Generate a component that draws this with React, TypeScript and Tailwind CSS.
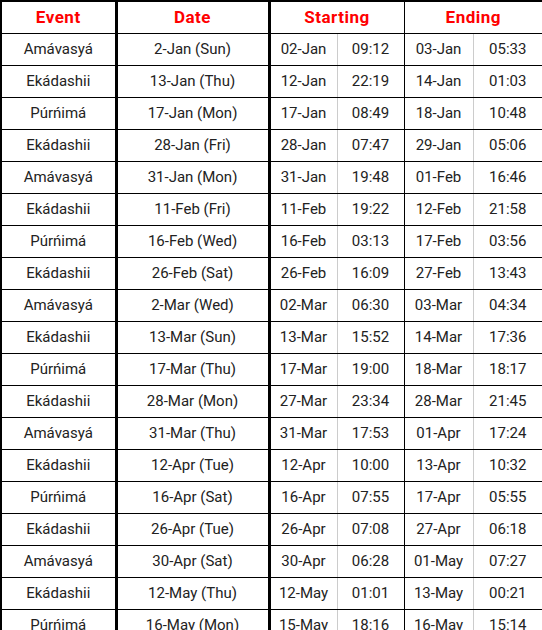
const rows: string[][] = [
  ["Amávasyá", "2-Jan (Sun)", "02-Jan", "09:12", "03-Jan", "05:33"],
  ["Ekádashii", "13-Jan (Thu)", "12-Jan", "22:19", "14-Jan", "01:03"],
  ["Púrńimá", "17-Jan (Mon)", "17-Jan", "08:49", "18-Jan", "10:48"],
  ["Ekádashii", "28-Jan (Fri)", "28-Jan", "07:47", "29-Jan", "05:06"],
  ["Amávasyá", "31-Jan (Mon)", "31-Jan", "19:48", "01-Feb", "16:46"],
  ["Ekádashii", "11-Feb (Fri)", "11-Feb", "19:22", "12-Feb", "21:58"],
  ["Púrńimá", "16-Feb (Wed)", "16-Feb", "03:13", "17-Feb", "03:56"],
  ["Ekádashii", "26-Feb (Sat)", "26-Feb", "16:09", "27-Feb", "13:43"],
  ["Amávasyá", "2-Mar (Wed)", "02-Mar", "06:30", "03-Mar", "04:34"],
  ["Ekádashii", "13-Mar (Sun)", "13-Mar", "15:52", "14-Mar", "17:36"],
  ["Púrńimá", "17-Mar (Thu)", "17-Mar", "19:00", "18-Mar", "18:17"],
  ["Ekádashii", "28-Mar (Mon)", "27-Mar", "23:34", "28-Mar", "21:45"],
  ["Amávasyá", "31-Mar (Thu)", "31-Mar", "17:53", "01-Apr", "17:24"],
  ["Ekádashii", "12-Apr (Tue)", "12-Apr", "10:00", "13-Apr", "10:32"],
  ["Púrńimá", "16-Apr (Sat)", "16-Apr", "07:55", "17-Apr", "05:55"],
  ["Ekádashii", "26-Apr (Tue)", "26-Apr", "07:08", "27-Apr", "06:18"],
  ["Amávasyá", "30-Apr (Sat)", "30-Apr", "06:28", "01-May", "07:27"],
  ["Ekádashii", "12-May (Thu)", "12-May", "01:01", "13-May", "00:21"],
  ["Púrńimá", "16-May (Mon)", "15-May", "18:16", "16-May", "15:14"],
];

const App = () => {
  return (
    <div className="w-[542px] h-[630px] overflow-hidden bg-white">
      <table
        className="w-[542px] table-fixed border-collapse border-2 border-black text-[15px] text-[#222]"
        style={{ fontFamily: "Roboto, 'Liberation Sans', sans-serif" }}
      >
        <colgroup>
          <col className="w-[115px]" />
          <col className="w-[153px]" />
          <col className="w-[68px]" />
          <col className="w-[67px]" />
          <col className="w-[69px]" />
          <col className="w-[70px]" />
        </colgroup>
        <thead>
          <tr className="h-[32px] text-[#ff0000] text-[17px] tracking-[0.5px]">
            <th className="border-b border-black border-r-[3px] font-bold pt-[1px]">Event</th>
            <th className="border-b border-black border-r-[3px] font-bold pt-[1px]">Date</th>
            <th colSpan={2} className="border-b border-r border-black font-bold pt-[1px]">Starting</th>
            <th colSpan={2} className="border-b border-black font-bold pt-[1px]">Ending</th>
          </tr>
        </thead>
        <tbody>
          {rows.map((r, i) => (
            <tr key={i} className="h-[32px] text-center">
              <td className="border-b border-black border-r-[3px]">{r[0]}</td>
              <td className="border-b border-black border-r-[3px]">{r[1]}</td>
              <td className="border-b border-b-black border-r border-r-[#cccccc]">{r[2]}</td>
              <td className="border-b border-black border-r">{r[3]}</td>
              <td className="border-b border-b-black border-r border-r-[#cccccc]">{r[4]}</td>
              <td className="border-b border-black">{r[5]}</td>
            </tr>
          ))}
        </tbody>
      </table>
    </div>
  );
};

export default App;
